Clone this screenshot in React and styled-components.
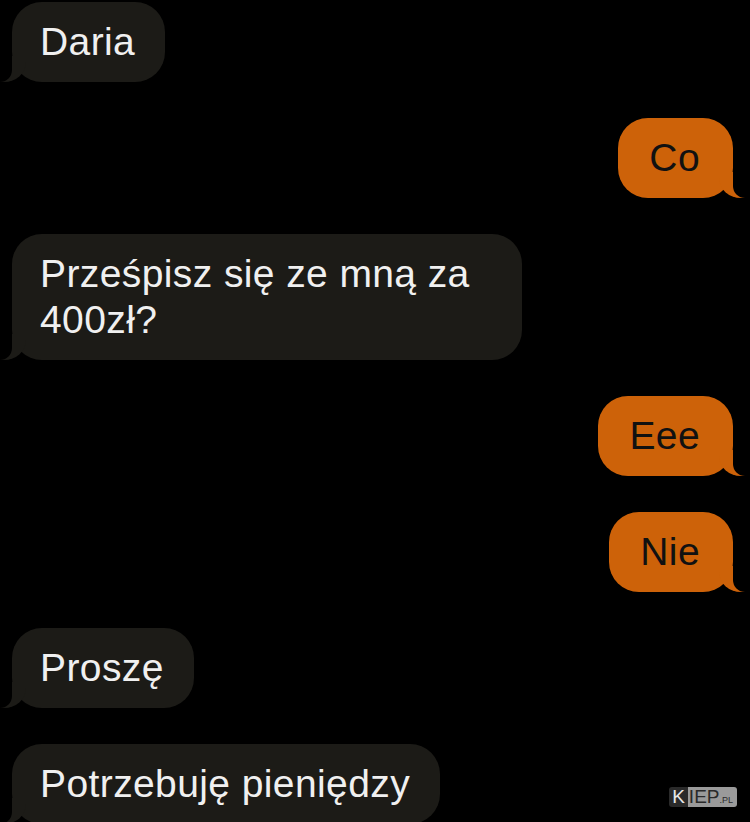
import React from 'react';
import styled, { createGlobalStyle } from 'styled-components';

const Global = createGlobalStyle`
  html, body {
    margin: 0;
    background: #000;
    overflow: hidden;
  }
  body {
    font-family: "Liberation Sans", Arial, sans-serif;
  }
`;

const Screen = styled.div`
  width: 750px;
  height: 822px;
  background: #000;
  position: relative;
  overflow: hidden;
`;

const Thread = styled.div`
  display: flex;
  flex-direction: column;
  gap: 36px;
  padding: 2px 17px 0 12px;
`;

const Row = styled.div`
  display: flex;
  justify-content: ${props => (props.mine ? 'flex-end' : 'flex-start')};
`;

const Bubble = styled.div`
  position: relative;
  background: ${props => (props.mine ? '#cd6209' : '#1c1b17')};
  color: ${props => (props.mine ? '#111' : '#f0f0f0')};
  font-size: 39px;
  letter-spacing: 0.4px;
  line-height: 46px;
  padding: 17px ${props => (props.mine ? '33px' : '30px')} 17px ${props => (props.mine ? '31px' : '28px')};
  border-radius: 30px;
  max-width: 510px;
  box-sizing: border-box;

  &::before {
    content: '';
    position: absolute;
    bottom: 0;
    height: 26px;
    ${props =>
      props.mine
        ? `right: -12px; border-left: 26px solid #cd6209; border-bottom-left-radius: 22px 20px;`
        : `left: -12px; border-right: 26px solid #1c1b17; border-bottom-right-radius: 22px 20px;`}
  }
  &::after {
    content: '';
    position: absolute;
    bottom: 0;
    width: 14px;
    height: 28px;
    background: #000;
    ${props =>
      props.mine
        ? `right: -14px; border-bottom-left-radius: 12px;`
        : `left: -14px; border-bottom-right-radius: 12px;`}
  }
`;

const Watermark = styled.div`
  position: absolute;
  right: 13px;
  bottom: 15px;
  display: flex;
  height: 20px;
  border-radius: 3px;
  overflow: hidden;
  font-size: 19px;
  line-height: 20px;
  font-family: "Liberation Sans", Arial, sans-serif;
`;

const MarkK = styled.span`
  background: #2a2a2a;
  color: #e8e8e8;
  padding: 0 3px 0 3px;
`;

const MarkRest = styled.span`
  background: #9a9a9a;
  color: #2a2a2a;
  padding: 0 4px 0 1px;
  small {
    font-size: 9px;
  }
`;

const messages = [
  { text: 'Daria' },
  { text: 'Co', mine: true },
  { text: 'Prześpisz się ze mną za 400zł?' },
  { text: 'Eee', mine: true },
  { text: 'Nie', mine: true },
  { text: 'Proszę' },
  { text: 'Potrzebuję pieniędzy' },
];

export default function App() {
  return (
    <Screen>
      <Global />
      <Thread>
        {messages.map((m, i) => (
          <Row key={i} mine={m.mine}>
            <Bubble mine={m.mine}>{m.text}</Bubble>
          </Row>
        ))}
      </Thread>
      <Watermark>
        <MarkK>K</MarkK>
        <MarkRest>IEP<small>.PL</small></MarkRest>
      </Watermark>
    </Screen>
  );
}
